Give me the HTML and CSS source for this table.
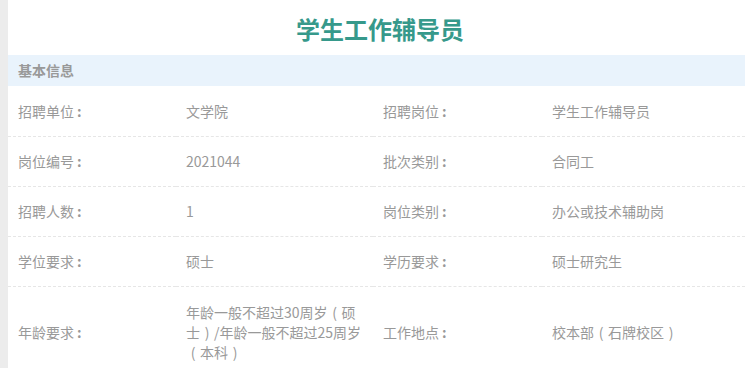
FILE: index.html
```html
<!DOCTYPE html>
<html lang="zh-CN">
<head>
<meta charset="utf-8">
<title>学生工作辅导员</title>
<link rel="stylesheet" href="styles.css">
</head>
<body>
<div class="layout">
  <div class="side"></div>
  <main class="main">
    <h1 class="title">学生工作辅导员</h1>
    <div class="section-head">基本信息</div>
    <table class="info">
      <colgroup>
        <col class="c1"><col class="c2"><col class="c3"><col class="c4">
      </colgroup>
      <tr>
        <td class="label">招聘单位<span class="colon">:</span></td><td class="value">文学院</td>
        <td class="label">招聘岗位<span class="colon">:</span></td><td class="value">学生工作辅导员</td>
      </tr>
      <tr>
        <td class="label">岗位编号<span class="colon">:</span></td><td class="value">2021044</td>
        <td class="label">批次类别<span class="colon">:</span></td><td class="value">合同工</td>
      </tr>
      <tr>
        <td class="label">招聘人数<span class="colon">:</span></td><td class="value">1</td>
        <td class="label">岗位类别<span class="colon">:</span></td><td class="value">办公或技术辅助岗</td>
      </tr>
      <tr>
        <td class="label">学位要求<span class="colon">:</span></td><td class="value">硕士</td>
        <td class="label">学历要求<span class="colon">:</span></td><td class="value">硕士研究生</td>
      </tr>
      <tr class="tall">
        <td class="label">年龄要求<span class="colon">:</span></td><td class="value">年龄一般不超过30周岁<span class="paren">(</span>硕士<span class="paren">)</span>/年龄一般不超过25周岁<span class="paren">(</span>本科<span class="paren">)</span></td>
        <td class="label">工作地点<span class="colon">:</span></td><td class="value">校本部<span class="paren">(</span>石牌校区<span class="paren">)</span></td>
      </tr>
    </table>
  </main>
</div>
</body>
</html>
```

FILE: styles.css
```css
html, body {
  margin: 0;
  padding: 0;
  background: #fff;
  overflow: hidden;
}
body {
  font-family: "Noto Sans CJK SC", "Liberation Sans", sans-serif;
  font-size: 14px;
  color: #999;
}
.layout {
  display: flex;
  min-height: 368px;
}
.side {
  width: 8px;
  flex: 0 0 8px;
  background: #ececec;
}
.main {
  flex: 1;
  min-width: 0;
}
.title {
  margin: 0;
  height: 55px;
  line-height: 58px;
  padding-left: 7px;
  text-align: center;
  font-size: 24px;
  font-weight: bold;
  color: #36998b;
}
.section-head {
  height: 31px;
  line-height: 30px;
  background: #e9f3fc;
  padding-left: 10px;
  font-weight: bold;
  color: #999;
}
.info {
  width: 100%;
  border-collapse: collapse;
  table-layout: fixed;
}
.c1 { width: 168px; }
.c2 { width: 197px; }
.c3 { width: 169px; }
.info td {
  height: 50px;
  padding: 0 10px;
  border-bottom: 1px dashed #e6e6e6;
  line-height: 20px;
  vertical-align: middle;
  box-sizing: border-box;
}
.colon {
  display: inline-block;
  width: 14px;
  padding-left: 3px;
  box-sizing: border-box;
  font-weight: bold;
  line-height: 14px;
}
.paren {
  display: inline-block;
  width: 14px;
  text-align: center;
  line-height: 14px;
}
.info tr.tall td {
  padding-top: 15px;
  padding-bottom: 15px;
  border-bottom: none;
}
```
